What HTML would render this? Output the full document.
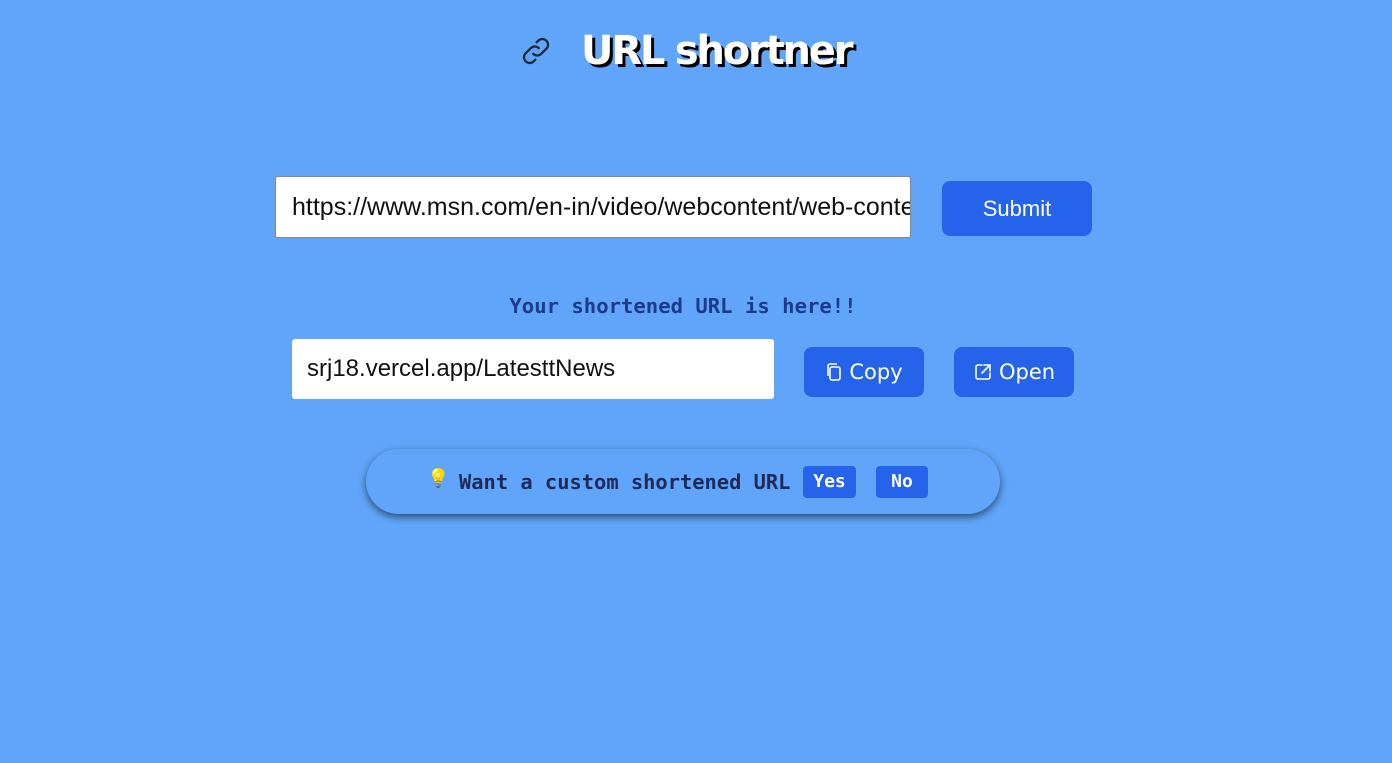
<!DOCTYPE html>
<html><head><meta charset="utf-8"><style>
html,body{margin:0;padding:0;width:1392px;height:763px;background:#60a5fa;overflow:hidden;font-family:"Liberation Sans",sans-serif}
.title{position:absolute;left:581px;top:28px;font:bold 40px "DejaVu Sans","Liberation Sans",sans-serif;color:#fff;text-shadow:3px 3px 0 #000;letter-spacing:-2.2px}
.icon{position:absolute;left:519px;top:34px}
.inp{position:absolute;left:275px;top:176px;width:636px;height:62px;background:#fff;border:1px solid #888;border-radius:3px;box-sizing:border-box;font-size:25px;line-height:60px;padding-left:16px;overflow:hidden;white-space:nowrap;color:#111}
.btn{position:absolute;background:#2563eb;color:#fff;border-radius:8px;text-align:center}
.mono{font-family:"DejaVu Sans Mono","Liberation Mono",monospace;font-weight:bold}
</style></head><body>
<svg class="icon" width="34" height="34" viewBox="0 0 24 24" fill="none" stroke="#1e293b" stroke-width="1.6" stroke-linecap="round"><path d="M10 14a4 4 0 0 0 5.7 0l3.6-3.6a4 4 0 0 0-5.7-5.7l-1.2 1.2"/><path d="M14 10a4 4 0 0 0-5.7 0l-3.6 3.6a4 4 0 0 0 5.7 5.7l1.2-1.2"/></svg>
<div class="title">URL shortner</div>
<div class="inp">https://www.msn.com/en-in/video/webcontent/web-content</div>
<div class="btn" style="left:942px;top:181px;width:150px;height:55px;line-height:55px;font-size:22px">Submit</div>
<div class="mono" style="position:absolute;left:0;width:1366px;text-align:center;top:294px;font-size:20.6px;color:#1e3a8a">Your shortened URL is here!!</div>
<div style="position:absolute;left:292px;top:339px;width:482px;height:60px;background:#fff;border-radius:3px;font-size:24px;line-height:60px;padding-left:15px;box-sizing:border-box;color:#111">srj18.vercel.app/LatesttNews</div>
<div class="btn" style="left:804px;top:347px;width:120px;height:50px;line-height:50px;font-size:21px;font-family:'DejaVu Sans',sans-serif">
<svg width="18" height="20" viewBox="0 0 18 20" style="vertical-align:-3px;margin-right:6px" fill="none" stroke="#fff" stroke-width="1.6"><rect x="5" y="5" width="10" height="13" rx="2"/><path d="M3 14V4a2 2 0 0 1 2-2h7"/></svg>Copy</div>
<div class="btn" style="left:954px;top:347px;width:120px;height:50px;line-height:50px;font-size:21px;font-family:'DejaVu Sans',sans-serif">
<svg width="20" height="20" viewBox="0 0 20 20" style="vertical-align:-3px;margin-right:6px" fill="none" stroke="#fff" stroke-width="1.6" stroke-linecap="round"><path d="M9 3H5a2 2 0 0 0-2 2v10a2 2 0 0 0 2 2h10a2 2 0 0 0 2-2v-4"/><path d="M11 3h6v6M17 3l-8 8"/></svg>Open</div>
<div style="position:absolute;left:366px;top:449px;width:634px;height:65px;border-radius:33px;background:#60a5fa;box-shadow:0 3px 8px rgba(0,0,0,.55)"></div>
<div style="position:absolute;left:427px;top:468px;font-size:18px">💡</div>
<div class="mono" style="position:absolute;left:459px;top:470px;font-size:20.4px;color:#1e2a5a">Want a custom shortened URL</div>
<div class="btn mono" style="left:803px;top:466px;width:53px;height:32px;line-height:32px;font-size:18px;border-radius:4px">Yes</div>
<div class="btn mono" style="left:876px;top:466px;width:52px;height:32px;line-height:32px;font-size:18px;border-radius:4px">No</div>
</body></html>
